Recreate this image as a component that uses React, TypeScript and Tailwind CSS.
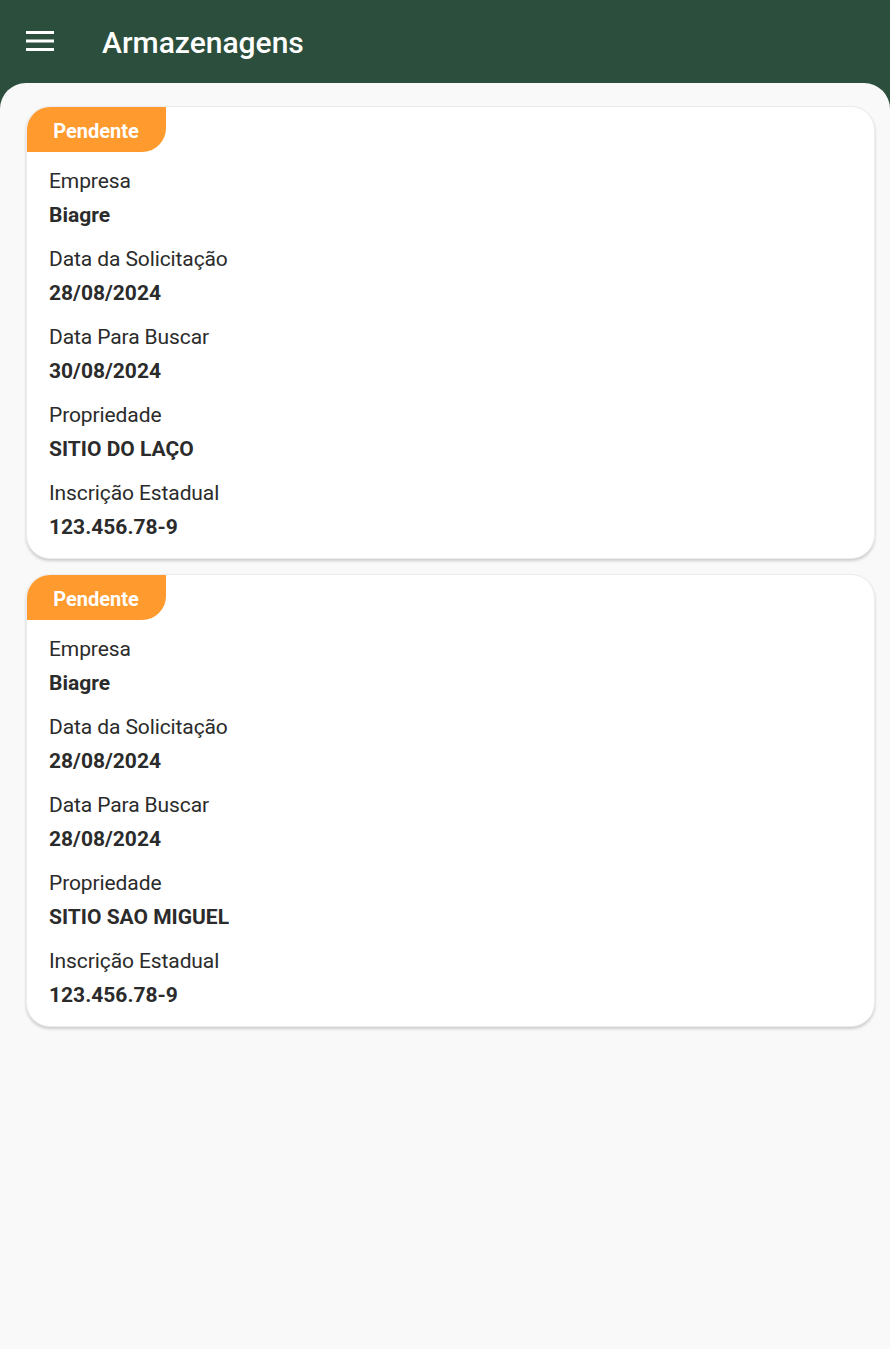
const items = [
  {
    empresa: 'Biagre',
    solicitacao: '28/08/2024',
    buscar: '30/08/2024',
    propriedade: 'SITIO DO LAÇO',
    ie: '123.456.78-9',
  },
  {
    empresa: 'Biagre',
    solicitacao: '28/08/2024',
    buscar: '28/08/2024',
    propriedade: 'SITIO SAO MIGUEL',
    ie: '123.456.78-9',
  },
]

function Field({ label, value }: { label: string; value: string }) {
  return (
    <div className="flex flex-col gap-[6px]">
      <span className="text-[21px] leading-[28px] text-[#2b2b2b] tracking-[-0.1px]">{label}</span>
      <span className="text-[21px] leading-[28px] font-bold text-[#2b2b2b]">{value}</span>
    </div>
  )
}

function App() {
  return (
    <div className="min-h-[1349px] bg-[#2c4e3c] font-['Roboto',sans-serif] flex flex-col">
      <header className="h-[83px] flex items-center px-[26px] shrink-0">
        <svg width="28" height="22" viewBox="0 0 28 22" className="mt-[-2px]">
          <rect x="0" y="1" width="28" height="3" fill="#fff" />
          <rect x="0" y="9.5" width="28" height="3" fill="#fff" />
          <rect x="0" y="18" width="28" height="3" fill="#fff" />
        </svg>
        <h1 className="ml-[48px] text-[30px] font-medium text-white mt-[2px]">Armazenagens</h1>
      </header>

      <main className="flex-1 bg-[#f9f9f9] rounded-t-[26px] pl-[26px] pr-[15px] pt-[23px] flex flex-col gap-[15px]">
        {items.map((it, i) => (
          <div
            key={i}
            className="bg-white rounded-[24px] border border-[#ececec] shadow-[0_2px_3px_rgba(0,0,0,0.18)] overflow-hidden pb-[17px]"
          >
            <div className="w-[140px] h-[46px] bg-[#ff9a2e] rounded-tl-[24px] rounded-br-[24px] flex items-center justify-center mt-[-1px] ml-[-1px]">
              <span className="text-white font-bold text-[20px] mt-[3px]">Pendente</span>
            </div>
            <div className="px-[22px] pt-[15px] flex flex-col gap-[16px]">
              <Field label="Empresa" value={it.empresa} />
              <Field label="Data da Solicitação" value={it.solicitacao} />
              <Field label="Data Para Buscar" value={it.buscar} />
              <Field label="Propriedade" value={it.propriedade} />
              <Field label="Inscrição Estadual" value={it.ie} />
            </div>
          </div>
        ))}
      </main>
    </div>
  )
}

export default App
